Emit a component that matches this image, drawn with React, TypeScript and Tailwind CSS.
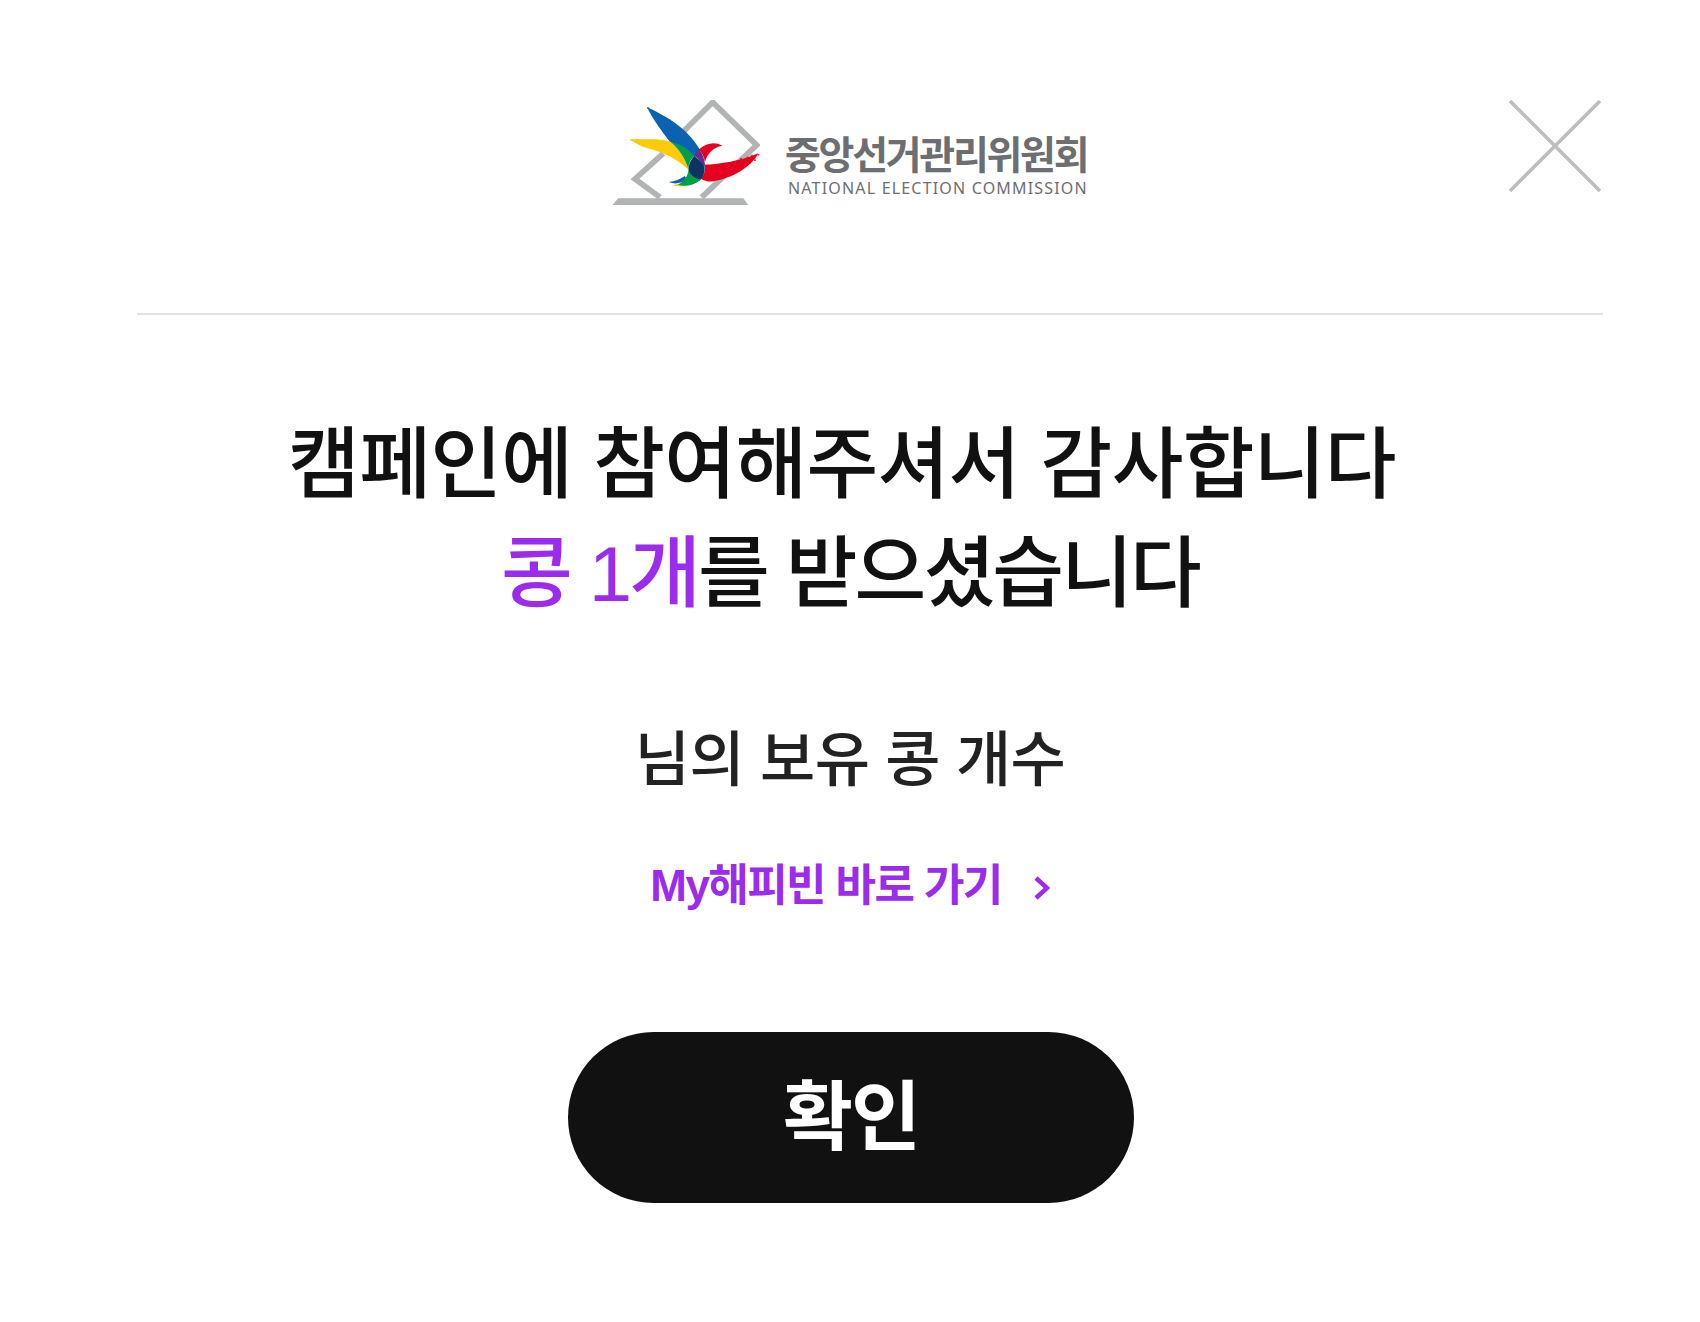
import React from 'react';

// brush speckle at the feather tips
const speckles: [number, number, string][] = [
  [142, 52, '#0b62b0'], [150, 62, '#0b62b0'], [158, 66, '#0b62b0'], [164, 82, '#0b62b0'], [176, 84, '#0b62b0'],
  [172, 96, '#0b62b0'], [186, 92, '#0b62b0'], [196, 90, '#0b62b0'], [182, 108, '#0b62b0'], [160, 76, '#0b62b0'],
  [168, 74, '#0b62b0'], [188, 118, '#0b62b0'], [205, 88, '#0b62b0'],
  [92, 148, '#ffcb08'], [102, 150, '#ffcb08'], [112, 156, '#ffcb08'], [120, 150, '#ffcb08'], [124, 162, '#ffcb08'],
  [134, 148, '#ffcb08'], [108, 146, '#ffcb08'], [136, 166, '#ffcb08'],
  [472, 192, '#e60020'], [460, 198, '#e60020'], [450, 204, '#e60020'], [440, 200, '#e60020'], [462, 208, '#e60020'],
  [446, 216, '#e60020'], [432, 208, '#e60020'], [430, 222, '#e60020'], [452, 194, '#e60020'], [420, 204, '#e60020'],
];

const NecMark = () => (
  <svg width="148" height="105" viewBox="36 30 444 315" fill="none">
    <path d="M180 322 L105 267 L190 190 M245 130 L338 37 L470 165 L305 322" stroke="#b1b3b4" strokeWidth="17" />
    <path d="M55 325 H430 L445 345 H37 Z" fill="#b1b3b4" />
    <path d="M140 50 C190 76 258 106 302 182 L283 200 C262 180 235 170 210 156 C186 125 160 90 140 50 Z" fill="#0b62b0" />
    <path d="M88 147 C130 150 180 143 212 155 C240 178 256 205 266 240 C232 206 185 184 140 174 C120 168 102 156 88 147 Z" fill="#ffcb08" />
    <path d="M212 155 C243 162 268 180 283 198 C270 210 264 225 266 240 C256 205 238 178 212 155 Z" fill="#00a04a" />
    <path d="M206 276 C225 274 240 268 254 258 L262 268 C245 280 225 284 206 276 Z" fill="#0b62b0" />
    <path d="M216 286 C232 290 250 291 268 286 L250 278 Z" fill="#ffcb08" />
    <path d="M234 284 C250 276 262 262 266 240 C275 256 290 266 304 268 C285 284 260 292 234 284 Z" fill="#00a04a" />
    <path d="M297 178 C320 158 345 154 367 167 C340 172 322 190 315 216 C313 202 306 190 297 178 Z" fill="#e60020" />
    <path d="M315 224 C350 224 420 214 475 190 C455 230 400 264 340 274 C326 276 312 272 303 266 C312 256 316 242 315 224 Z" fill="#e60020" />
    <path d="M283 198 C272 210 264 226 266 242 C272 256 288 268 304 268 C314 252 316 236 312 222 Z" fill="#0a3463" />
    <path d="M283 198 L297 178 C307 190 314 206 315 226 L312 232 C306 218 296 206 283 198 Z" fill="#6a2a86" />
    {speckles.map(([x, y, c], i) => (
      <rect key={i} x={x} y={y} width="6" height="5" fill={c} opacity="0.75" />
    ))}
  </svg>
);

export default function App() {
  return (
    <div className="min-h-screen bg-white pt-[100px] font-['Liberation_Sans','Noto_Sans_CJK_KR',sans-serif]">
      {/* Header */}
      <div className="ml-[137px] mr-[97px] grid h-[215px] grid-cols-[475px_auto_1fr] items-start border-b-2 border-[#e3e3e3]">
        <div />
        <div className="flex items-start">
          <NecMark />
          <div className="ml-[25px] mt-[29px] flex flex-col font-['Noto_Sans_CJK_KR',sans-serif] text-[#6d6e71]">
            <span className="text-[39px] font-bold leading-[46px] tracking-[-2.3px]">중앙선거관리위원회</span>
            <span className="ml-[3px] mt-[3px] whitespace-nowrap font-['Noto_Sans',sans-serif] text-[16px] leading-[20px] tracking-[1.18px]">
              NATIONAL ELECTION COMMISSION
            </span>
          </div>
        </div>
        <button className="justify-self-end pr-[2px]">
          <svg width="92" height="92" viewBox="0 0 92 92" fill="none" stroke="#bdbdbd" strokeWidth="3.5">
            <path d="M1 1 L91 91 M91 1 L1 91" />
          </svg>
        </button>
      </div>

      {/* Message */}
      <div className="mt-[96px] flex flex-col items-center text-center">
        <h1 className="text-[78px] font-medium leading-[109px] tracking-[-0.7px] text-[#111111]">
          <div className="pr-[16px]">캠페인에 참여해주셔서 감사합니다</div>
          <div className="tracking-[-2.9px]">
            <span className="text-[#9b2ceb]">콩 1개</span>를 받으셨습니다
          </div>
        </h1>
        <p className="mt-[94px] text-[60px] font-medium leading-[76px] tracking-[-0.6px] text-[#222222]">님의 보유 콩 개수</p>
        <a className="mt-[57px] flex items-center text-[44px] font-bold leading-[60px] tracking-[-1.6px] text-[#9b2ceb]">
          My해피빈 바로 가기
          <svg className="ml-[32px] mt-[4px]" width="16" height="26" viewBox="0 0 16 26" fill="none" stroke="#9b2ceb" strokeWidth="4.5">
            <path d="M2 3 L13 13 L2 23" />
          </svg>
        </a>
        <button className="ml-[2px] mt-[116px] h-[171px] w-[566px] rounded-full bg-[#111111] text-[76px] font-bold tracking-[-2px] text-white">
          확인
        </button>
      </div>
    </div>
  );
}
